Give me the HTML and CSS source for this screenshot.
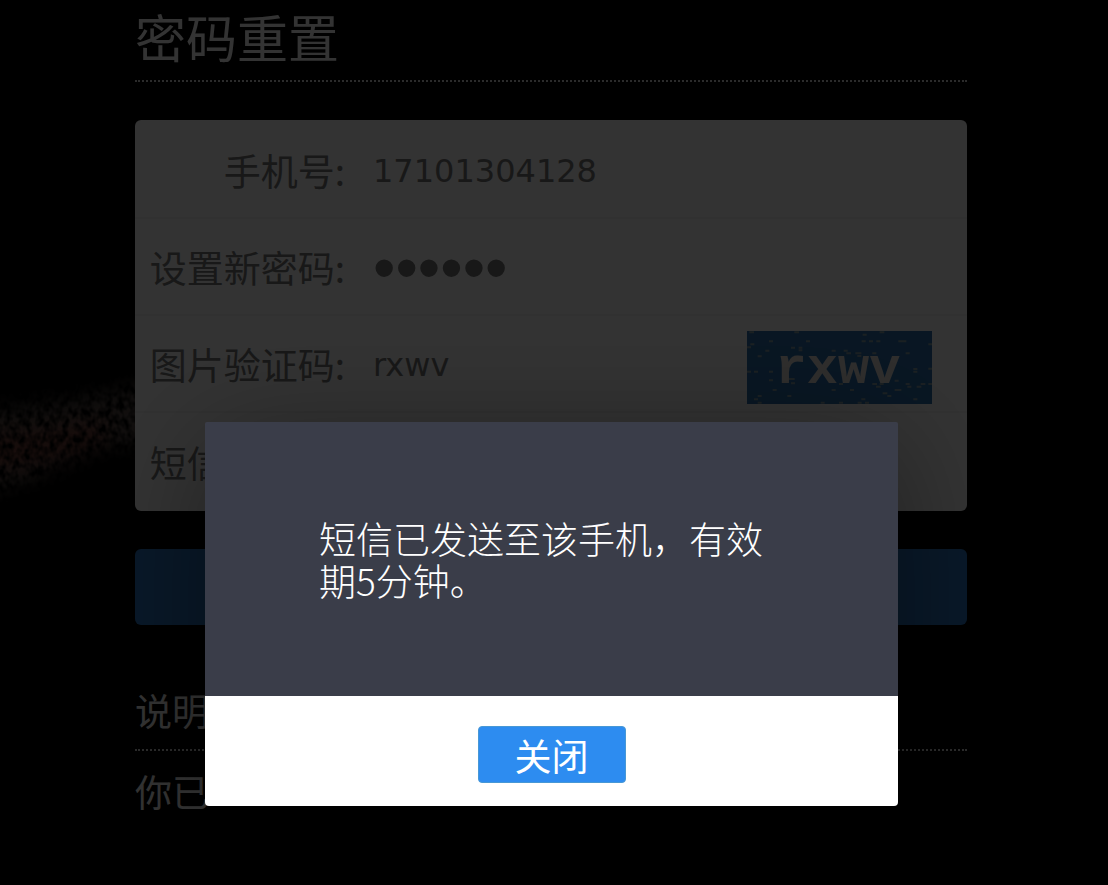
FILE: index.html
```
<!DOCTYPE html>
<html lang="zh-CN">
<head>
    <meta charset="UTF-8">
    <meta name="viewport" content="width=device-width, initial-scale=1">
    <title>密码重置</title>

    <link rel="stylesheet" href="styles.css">
</head>
<body>
    <svg class="nebula" width="180" height="180" viewBox="0 0 180 180" aria-hidden="true">
        <defs>
            <filter id="dust" x="-20%" y="-20%" width="140%" height="140%">
                <feGaussianBlur in="SourceGraphic" stdDeviation="10" result="soft"/>
                <feTurbulence type="fractalNoise" baseFrequency="0.16 0.12" numOctaves="2" seed="7"/>
                <feColorMatrix values="0 0 0 0 1  0 0 0 0 1  0 0 0 0 1  2.4 0 0 0 -0.6" result="grain"/>
                <feComposite in="soft" in2="grain" operator="in"/>
            </filter>
        </defs>
        <g filter="url(#dust)">
            <path d="M-30 52 L60 42 L170 20 L170 80 L100 88 L30 120 L-30 138Z" fill="#544a45"/>
            <path d="M-30 78 L50 70 L110 60 L100 84 L40 102 L-30 112Z" fill="#743c36"/>
        </g>
    </svg>

    <div class="container">
        <h1 class="title">密码重置</h1>

        <form>
            <div class="panel">
                <div class="row">
                    <label class="row-label" for="phone">手机号:</label>
                    <input class="row-input" type="text" id="phone" value="17101304128">
                </div>

                <div class="row">
                    <label class="row-label" for="password">设置新密码:</label>
                    <input class="row-input password" type="password" id="password" value="rxwv12">
                </div>

                <div class="row">
                    <label class="row-label" for="captcha">图片验证码:</label>
                    <input class="row-input" type="text" id="captcha" value="rxwv">
                    <svg class="captcha" viewBox="83 63 555 219" role="img" aria-label="验证码">
                        <path class="specks" d="M90 67h14M225 67h14M430 74h12M481 67h14M149 94h12M260 94h12M427 94h12M449 94h12M471 94h12M537 94h24M627 103h11M93 103h12M83 112h12M138 122h12M215 113h12M238 113h11M238 121h11M337 122h12M373 122h12M381 130h14M408 130h18M414 138h12M459 130h12M559 130h12M115 139h12M83 185h12M104 185h12M149 185h12M582 177h12M582 185h12M627 176h11M206 207h20M149 211h12M215 220h12M160 240h12M204 258h12M115 258h12M104 268h12M115 278h12M304 278h12M359 278h12M337 240h12M392 240h12M359 222h12M459 222h14M470 230h14M481 222h12M490 250h14M504 258h12M526 240h20M526 212h12M559 222h12M564 230h12M592 230h14M604 222h14M627 222h11M582 268h12M415 278h12M437 278h12M426 268h12"/>
                        <text class="captcha-text" x="356" y="218">rxwv</text>
                    </svg>
                </div>

                <div class="row">
                    <label class="row-label" for="sms">短信验证码:</label>
                    <input class="row-input" type="text" id="sms">
                </div>
            </div>

            <button class="submit" type="submit" aria-label="提交"></button>
        </form>

        <h2 class="note-title">说明</h2>
        <p class="note">你已</p>
    </div>

    <div class="overlay">
        <div class="dialog" role="dialog" aria-modal="true" aria-labelledby="message">
            <div class="dialog-body">
                <p class="message" id="message">短信已发送至该手机，有效期5分钟。</p>
            </div>
            <div class="dialog-footer">
                <button class="close" type="button">关闭</button>
            </div>
        </div>
    </div>
</body>
</html>
```

FILE: styles.css
```
* {
    box-sizing: border-box;
}
body {
    margin: 0;
    background: #000;
    color: #fff;
    font-family: "Noto Sans CJK SC", sans-serif;
    font-size: 37px;
    overflow: hidden;
}
.nebula {
    position: absolute;
    left: 0;
    top: 360px;
}
.container {
    position: relative;
    padding: 0 141px 0 135px;
}

/* page */
.title {
    margin: 0 0 38px;
    padding: 6px 0 14px;
    border-bottom: 2px dotted #d8d8d8;
    font-size: 51px;
    font-weight: 400;
    line-height: 60px;
}
.panel {
    padding: 2px 0 1px;
    background: #fdfdfd;
    border-radius: 6px;
}
.row {
    display: flex;
    align-items: center;
    gap: 28px;
    height: 97px;
    padding-right: 35px;
    border-bottom: 2px solid #f4f4f4;
}
.row:last-child {
    border-bottom: 0;
}
.row-label {
    width: 210px;
    flex-shrink: 0;
    text-align: right;
    white-space: nowrap;
    color: #787878;
    line-height: 54px;
}
.row-input {
    flex: 1;
    min-width: 0;
    padding: 2px 0 0;
    border: 0;
    outline: 0;
    background: transparent;
    color: #787878;
    font-family: "DejaVu Sans", sans-serif;
    font-size: 32px;
}
.row-input.password {
    font-family: "Liberation Sans", sans-serif;
    font-size: 64px;
}
.captcha {
    width: 185px;
    height: 73px;
    flex-shrink: 0;
    margin-top: 8px;
    background: #2d70af;
}
.specks {
    fill: none;
    stroke: #86a0ac;
    stroke-width: 6;
}
.captcha-text {
    fill: #e8e4e0;
    font-family: "Liberation Mono", monospace;
    font-size: 156px;
    font-weight: 700;
    text-anchor: middle;
}
.submit {
    display: block;
    width: 100%;
    height: 76px;
    margin-top: 38px;
    border: 0;
    border-radius: 6px;
    background: #2d7ac8;
}
.note-title {
    margin: 58px 0 13px;
    padding-bottom: 12px;
    border-bottom: 2px dotted #d8d8d8;
    font-size: 37px;
    font-weight: 400;
    line-height: 54px;
}
.note {
    margin: 0;
    line-height: 54px;
}

/* dialog */
.overlay {
    position: fixed;
    inset: 0;
    padding: 422px 210px 0 205px;
    background: rgba(0, 0, 0, 0.8);
}
.dialog {
    border-radius: 2px 2px 4px 4px;
    overflow: hidden;
    box-shadow: 0 20px 120px rgba(0, 0, 0, 0.4);
}
.dialog-body {
    padding: 95px 114px;
    background: #3a3d49;
}
.message {
    margin: 0;
    font-weight: 300;
    line-height: 42px;
}
.dialog-footer {
    display: flex;
    justify-content: center;
    padding: 30px 0 23px;
    background: #fff;
}
.close {
    width: 148px;
    height: 57px;
    padding: 0;
    border: 1px solid #4898d5;
    border-radius: 4px;
    background: #2d8cf0;
    color: #fff;
    font-family: "Noto Sans CJK SC", sans-serif;
    font-size: 37px;
    line-height: 54px;
}
```
